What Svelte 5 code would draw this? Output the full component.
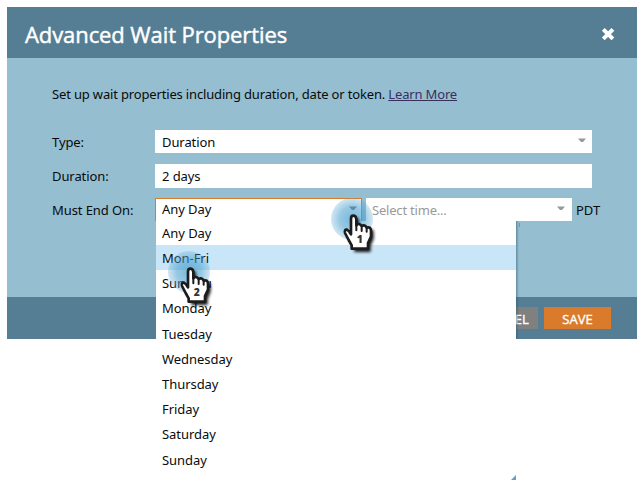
<script>
  const days = ['Any Day', 'Mon-Fri', 'Sun-Thu', 'Monday', 'Tuesday', 'Wednesday', 'Thursday', 'Friday', 'Saturday', 'Sunday'];
  const pointers = [
    { n: 1, x: 320, y: 185 },
    { n: 2, x: 157.3, y: 238.3 }
  ];
</script>

{#snippet arrow()}
  <svg class="arrow" width="8" height="5" viewBox="0 0 8 5"><path d="M0 .5H8L5 4H3Z" fill="currentColor" /></svg>
{/snippet}

<main>
  <section class="dialog">
    <header>
      <h1>Advanced Wait Properties</h1>
      <svg width="14" height="14" viewBox="0 0 14 14"><path d="M2.3 2.3L11.9 11.9M11.9 2.3L2.3 11.9" stroke="#fff" stroke-width="4" /></svg>
    </header>
    <div class="body">
      <p>Set up wait properties including duration, date or token. <a href="#learn">Learn More</a></p>
      <div class="row">
        <span class="label">Type:</span>
        <div class="field wide">Duration {@render arrow()}</div>
      </div>
      <div class="row second">
        <span class="label">Duration:</span>
        <div class="field wide tall">2 days</div>
      </div>
      <div class="row third">
        <span class="label">Must End On:</span>
        <div class="field active">Any Day {@render arrow()}</div>
        <div class="field time">Select time... {@render arrow()}</div>
        <span class="zone">PDT</span>
      </div>
    </div>
    <footer>
      <button class="cancel">CANCEL</button>
      <button class="save">SAVE</button>
    </footer>
  </section>

  <ul class="menu">
    {#each days as day, i}
      <li class:selected={i === 1}>{day}</li>
    {/each}
    <svg class="grip" width="5" height="5" viewBox="0 0 5 5"><path d="M5 0V5H0Z" fill="#5f9fc5" /></svg>
  </ul>
  <div class="edge"></div>
  <div class="tick"></div>

  {#each pointers as p}
    <svg class="pointer" style="left:{p.x}px;top:{p.y}px" width="80" height="80" viewBox="0 0 240 240">
      <defs>
        <radialGradient id="halo{p.n}">
          <stop offset="0" stop-color="#3c9bca" stop-opacity=".7" />
          <stop offset=".6" stop-color="#4a9fce" stop-opacity=".56" />
          <stop offset="1" stop-color="#5aa9d4" stop-opacity=".28" />
        </radialGradient>
        <filter id="soft{p.n}" x="-30%" y="-30%" width="170%" height="170%"><feGaussianBlur stdDeviation="5" /></filter>
      </defs>
      <circle cx="96" cy="102" r="63" fill="url(#halo{p.n})" />
      <path transform="translate(9 9)" filter="url(#soft{p.n})" opacity=".9" d="M91 100Q91 89 99 89T108 100V118Q114 109 124 121Q134 114 139 125Q152 120 152 136V152L143 174V192H94V182L84 165L73 144Q72 131 80 132Q86 135 91 146Z" />
      <path d="M93 101Q93 92 100 92T109 101V121Q117 112 125 123Q135 117 140 128Q153 124 153 138V155L144 174V191H95V181L86 165L75 144Q73 132 81 134Q87 137 93 148Z" fill="#fff" stroke="#1c1c1c" stroke-width="8" stroke-linejoin="round" />
      <path d="M109 118V136M125 122V138M140 127V140" stroke="#1c1c1c" stroke-width="6" stroke-linecap="round" />
      <text x="119" y="175" text-anchor="middle">{p.n}</text>
    </svg>
  {/each}
</main>

<style>
  :global(body) { margin: 0; background: #fff; }
  main {
    position: relative; box-sizing: border-box; width: 644px; height: 496px; padding: 7px;
    overflow: hidden; font: 13px/18px "Noto Sans", sans-serif; color: #080b0d;
  }
  .dialog { width: 630px; height: 332px; display: flex; flex-direction: column; background: #95bed0; }
  header {
    height: 51px; box-sizing: border-box; padding: 3px 22px 0 18px; display: flex; align-items: center;
    justify-content: space-between; background: #557d94; color: #fff;
  }
  h1 { margin: 0; font: 500 22px/30px "Open Sans", sans-serif; letter-spacing: -.09px; -webkit-text-stroke: .45px #fff; }
  .body { height: 239px; box-sizing: border-box; padding: 27px 0 0 45px; }
  p { margin: 0 0 27px; height: 18px; white-space: nowrap; letter-spacing: -.16px; }
  a { color: #392f5d; }
  .row { display: flex; align-items: center; height: 23px; }
  .second { height: 24px; margin: 11px 0 10px; }
  .label { width: 103px; flex: none; letter-spacing: -.08px; }
  .field {
    box-sizing: border-box; width: 207px; height: 23px; padding: 0 6px 0 7px; display: flex;
    align-items: center; justify-content: space-between; background: #fff; letter-spacing: -.08px;
  }
  .wide { width: 437px; }
  .tall { height: 24px; }
  .active { border: 1px solid #d97b2b; border-bottom: 0; padding: 0 4px 2px 6px; }
  .active .arrow { color: #777; }
  .time { width: 206px; margin-left: 4px; padding: 0 7px 0 6px; color: #999; letter-spacing: -.2px; }
  .arrow { color: #999; margin-bottom: 2px; }
  .zone { margin-left: 4px; }
  footer {
    height: 42px; box-sizing: border-box; padding: 10px 26px 0 0; display: flex; justify-content: flex-end;
    gap: 6px; background: #557d94;
  }
  button {
    height: 22px; border: 0; padding: 2px 0 0; color: #fff; font: 500 13px/18px "Open Sans", sans-serif;
    -webkit-text-stroke: .35px #fff;
  }
  .cancel { width: 73px; padding-left: 6px; background: #808080; }
  .save { width: 67px; background: #d97b2b; }
  .menu {
    position: absolute; left: 156px; top: 221px; width: 360px; height: 259px; margin: 0; padding: 0;
    list-style: none; background: #fff;
  }
  .edge {
    position: absolute; left: 516px; top: 221px; width: 3px; height: 118px;
    background: linear-gradient(90deg, rgb(40 80 105 / 45%), transparent);
  }
  .tick { position: absolute; left: 519px; top: 223px; width: 1px; height: 4px; background: #6c98ac; }
  li { height: 25.2px; box-sizing: border-box; padding: 4px 6px 0; letter-spacing: -.05px; }
  li:first-child { height: 24px; padding-top: 3px; }
  .selected { background: #c9e5f8; }
  .grip { position: absolute; right: 0; bottom: 0; }
  .pointer { position: absolute; overflow: visible; }
  text { font: 800 31px "Open Sans", sans-serif; fill: #333; }
</style>
